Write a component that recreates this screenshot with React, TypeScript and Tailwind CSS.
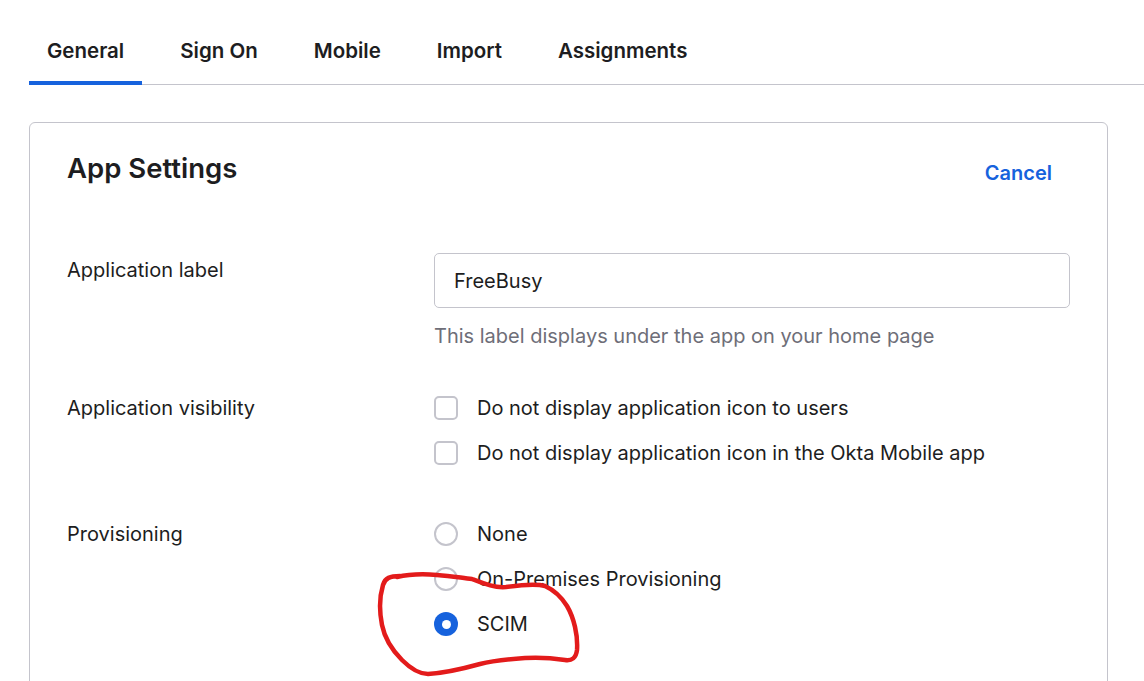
import React from 'react'

const tabs = ['General', 'Sign On', 'Mobile', 'Import', 'Assignments']

function Checkbox({ label }: { label: string }) {
  return (
    <label className="flex items-center gap-[19px] h-[28px]">
      <span className="w-[24px] h-[24px] rounded-[5px] border-2 border-[#c4c4cc] bg-white shrink-0" />
      <span>{label}</span>
    </label>
  )
}

function Radio({ label, checked }: { label: string; checked?: boolean }) {
  return (
    <label className="flex items-center gap-[19px] h-[28px]">
      {checked ? (
        <span className="w-[24px] h-[24px] rounded-full bg-[#1662dd] flex items-center justify-center shrink-0">
          <span className="w-[9px] h-[9px] rounded-full bg-white" />
        </span>
      ) : (
        <span className="w-[24px] h-[24px] rounded-full border-2 border-[#c4c4cc] bg-white shrink-0" />
      )}
      <span>{label}</span>
    </label>
  )
}

export default function App() {
  return (
    <div
      className="relative w-[1144px] h-[681px] overflow-hidden bg-white text-[#1d1d21] pl-[29px]"
      style={{ fontFamily: 'Inter, "Noto Sans", sans-serif' }}
    >
      {/* Tabs */}
      <div className="flex gap-[20px] pt-[20px] border-b border-[#c4c4cc]">
        {tabs.map((t, i) => (
          <div
            key={t}
            className={`px-[18px] pt-[17px] pb-[16px] text-[20.5px] leading-[28px] font-semibold border-b-[4px] -mb-px ${
              i === 0 ? 'border-[#1662dd]' : 'border-transparent'
            }`}
          >
            {t}
          </div>
        ))}
      </div>

      {/* Card */}
      <div className="mt-[37px] mr-[36px] h-[600px] rounded-[6px] border border-[#c4c4cc] pl-[37px] pr-[37px] pt-[29px] text-[20px] leading-[28px]">
        <div className="flex items-start justify-between">
          <h2 className="text-[27.5px] leading-[32px] font-semibold">App Settings</h2>
          <button className="mt-[7px] mr-[18px] text-[20px] leading-[28px] font-semibold text-[#1662dd]">Cancel</button>
        </div>

        {/* Application label */}
        <div className="flex mt-[66px]">
          <div className="w-[367px] shrink-0 pt-[3px]">Application label</div>
          <div className="flex-1">
            <div className="h-[55px] rounded-[5px] border border-[#c4c4cc] px-[19px] flex items-center">FreeBusy</div>
            <p className="mt-[14px] text-[#6e6e78]">This label displays under the app on your home page</p>
          </div>
        </div>

        {/* Application visibility */}
        <div className="flex mt-[44px]">
          <div className="w-[367px] shrink-0">Application visibility</div>
          <div className="flex flex-col gap-[17px]">
            <Checkbox label="Do not display application icon to users" />
            <Checkbox label="Do not display application icon in the Okta Mobile app" />
          </div>
        </div>

        {/* Provisioning */}
        <div className="flex mt-[53px]">
          <div className="w-[367px] shrink-0">Provisioning</div>
          <div className="flex flex-col gap-[17px]">
            <Radio label="None" />
            <Radio label="On-Premises Provisioning" />
            <Radio label="SCIM" checked />
          </div>
        </div>
      </div>

      {/* hand-drawn annotation */}
      <svg className="absolute left-0 top-0 pointer-events-none" width="1144" height="681" viewBox="0 0 1144 681">
        <path
          d="M397 577 C410 574 425 574 437 575 C452 576 462 578 472 579 C485 584 495 588 506 587 C520 585 535 583 545 586 C556 591 562 598 567 606 C574 618 578 635 577 650 C576 658 572 661 565 660 C552 658 540 657 525 658 C510 659 495 660 480 664 C462 669 445 673 428 674 C418 674 410 668 402 660 C392 650 385 640 382 625 C379 610 380 595 383 585 C385 578 390 576 400 576"
          fill="none"
          stroke="#e31b1b"
          strokeWidth="4.5"
          strokeLinecap="round"
          strokeLinejoin="round"
        />
      </svg>
    </div>
  )
}
